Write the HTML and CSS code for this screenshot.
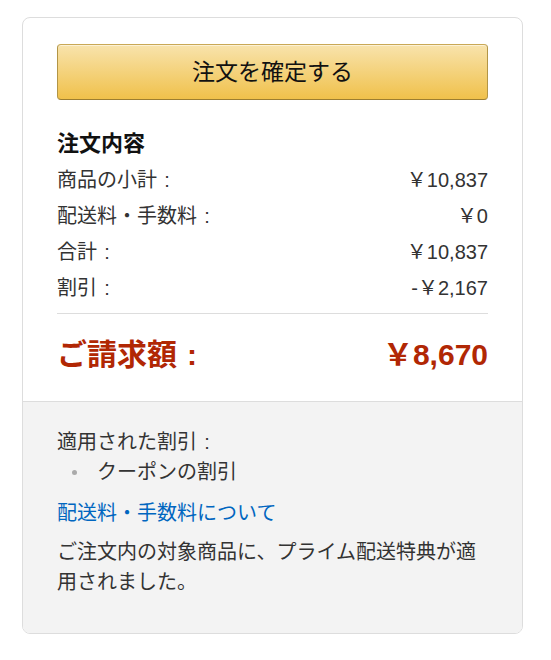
FILE: index.html
```html
<!DOCTYPE html>
<html lang="ja">
<head>
    <meta charset="UTF-8">
    <title>注文内容</title>
    <link rel="stylesheet" href="styles.css">
</head>
<body>
<div class="box">
    <div class="summary">
        <div class="btn"><span>注文を確定する</span></div>
        <h3>注文内容</h3>
        <ul class="rows">
            <li><span>商品の小計<i class="c">:</i></span><span>￥10,837</span></li>
            <li><span>配送料・手数料<i class="c">:</i></span><span>￥0</span></li>
            <li><span>合計<i class="c">:</i></span><span>￥10,837</span></li>
            <li><span>割引<i class="c">:</i></span><span>-￥2,167</span></li>
        </ul>
        <div class="total"><span>ご請求額<i class="c">:</i></span><span>￥8,670</span></div>
    </div>
    <div class="notes">
        <p>適用された割引<i class="c">:</i></p>
        <ul class="disc">
            <li>クーポンの割引</li>
        </ul>
        <a href="#" class="link">配送料・手数料について</a>
        <p class="prime">ご注文内の対象商品に、プライム配送特典が適用されました。</p>
    </div>
</div>
</body>
</html>
```

FILE: styles.css
```css
*{
    margin:0;
    padding:0;
    box-sizing:border-box;
}
ul{
    list-style:none;
}
body{
    background:#fff;
    padding:17px 0 0 22px;
    font-family:"Liberation Sans","Noto Sans CJK JP",sans-serif;
    color:#111;
}
.box{
    width:501px;
    border:1px solid #ddd;
    border-radius:8px;
    overflow:hidden;
}
/* full-width colon, drawn centred like the original */
.c{
    display:inline-block;
    width:1em;
    text-align:center;
    font-style:normal;
}
.summary{
    padding:26px 34px 26px;
}
.btn{
    height:56px;
    line-height:54px;
    text-align:center;
    font-size:23px;
    color:#111;
    border:1px solid #a88734;
    border-color:#c9a856 #b29546 #9c7e31;
    border-radius:4px;
    background:linear-gradient(to bottom,#f8e3ac,#f0c14b);
    box-shadow:0 1px 0 rgba(255,255,255,.5) inset;
}
h3{
    margin-top:26px;
    font-size:22px;
    line-height:36px;
    font-weight:bold;
}
.rows li{
    display:flex;
    justify-content:space-between;
    font-size:20px;
    line-height:36px;
    color:#333;
}
.total{
    margin-top:7px;
    border-top:1px solid #ddd;
    padding-top:21px;
    display:flex;
    justify-content:space-between;
    font-size:30px;
    line-height:40px;
    font-weight:bold;
    color:#b12704;
}
.notes{
    background:#f3f3f3;
    border-top:1px solid #ddd;
    padding:25px 34px 36px;
    font-size:20px;
    line-height:30px;
    color:#333;
}
.disc li{
    position:relative;
    padding-left:40px;
}
.disc li:before{
    content:"";
    position:absolute;
    left:15px;
    top:13px;
    width:5px;
    height:5px;
    border-radius:50%;
    background:#aaa;
}
.link{
    display:block;
    margin-top:11px;
    color:#0066c0;
    text-decoration:none;
}
.prime{
    margin-top:9px;
}
```
